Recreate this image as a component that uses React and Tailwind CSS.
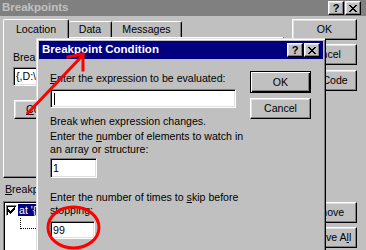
import React from "react";

function CloseGlyph() {
  return (
    <svg width="8" height="7" viewBox="0 0 8 7" shapeRendering="crispEdges">
      <rect x="0" y="0" width="2" height="1" fill="#000" />
      <rect x="6" y="0" width="2" height="1" fill="#000" />
      <rect x="1" y="1" width="2" height="1" fill="#000" />
      <rect x="5" y="1" width="2" height="1" fill="#000" />
      <rect x="2" y="2" width="4" height="1" fill="#000" />
      <rect x="3" y="3" width="2" height="1" fill="#000" />
      <rect x="2" y="4" width="4" height="1" fill="#000" />
      <rect x="1" y="5" width="2" height="1" fill="#000" />
      <rect x="5" y="5" width="2" height="1" fill="#000" />
      <rect x="0" y="6" width="2" height="1" fill="#000" />
      <rect x="6" y="6" width="2" height="1" fill="#000" />
    </svg>
  );
}

function CapButtons() {
  return (
    <div className="flex gap-[1px]">
      <div className="flex h-[14px] w-[16px] items-center justify-center border border-t-white border-l-white border-r-black border-b-black bg-[#c0c0c0] shadow-[inset_-1px_-1px_0_#808080,inset_1px_1px_0_#dfdfdf]">
        <span className="text-[11px] font-bold leading-none text-black">?</span>
      </div>
      <div className="flex h-[14px] w-[16px] items-center justify-center border border-t-white border-l-white border-r-black border-b-black bg-[#c0c0c0] shadow-[inset_-1px_-1px_0_#808080,inset_1px_1px_0_#dfdfdf]">
        <CloseGlyph />
      </div>
    </div>
  );
}

function Btn({ children, className = "" }) {
  return (
    <div
      className={
        "flex items-center justify-center border border-t-white border-l-white border-r-black border-b-black bg-[#c0c0c0] shadow-[inset_-1px_-1px_0_#808080,inset_1px_1px_0_#dfdfdf] whitespace-nowrap " +
        className
      }
    >
      {children}
    </div>
  );
}

function Field({ children, className = "" }) {
  return (
    <div
      className={
        "flex items-center border border-t-[#808080] border-l-[#808080] border-r-white border-b-white bg-white pl-[2px] shadow-[inset_1px_1px_0_#000,inset_-1px_-1px_0_#dfdfdf] whitespace-nowrap overflow-hidden " +
        className
      }
    >
      {children}
    </div>
  );
}

export default function App() {
  return (
    <div className="relative h-[250px] w-[366px] overflow-hidden bg-[#c0c0c0] font-['Liberation_Sans',Arial,sans-serif] text-[10.6px] leading-[13px] text-black">
      {/* Outer window title bar */}
      <div className="flex h-[16px] items-center bg-[#808080] pl-[2px] pr-[5px]">
        <span className="text-[11.5px] font-bold leading-none text-[#c0c0c0]">Breakpoints</span>
        <div className="ml-auto">
          <CapButtons />
        </div>
      </div>

      {/* Outer window body */}
      <div className="flex pl-[3px] pt-[3px]">
        {/* left column */}
        <div className="flex w-[281px] flex-col">
          <div className="relative z-10 flex h-[18px] items-end">
            <div className="mb-[-1px] flex h-[19px] w-[66px] justify-center rounded-t-[2px] border-t border-l border-r border-t-white border-l-white border-r-black bg-[#c0c0c0] pt-[3px] shadow-[inset_-1px_0_0_#808080]">
              Location
            </div>
            <div className="flex h-[16px] w-[43px] justify-center rounded-t-[2px] border-t border-r border-t-white border-r-black bg-[#c0c0c0] pt-[1px] shadow-[inset_-1px_0_0_#808080]">
              Data
            </div>
            <div className="flex h-[16px] w-[70px] justify-center rounded-t-[2px] border-t border-r border-t-white border-r-black bg-[#c0c0c0] pt-[1px] shadow-[inset_-1px_0_0_#808080]">
              Messages
            </div>
          </div>
          <div className="flex h-[141px] flex-col border border-t-white border-l-white border-r-black border-b-black pl-[9px] pt-[13px] shadow-[inset_-1px_-1px_0_#808080]">
            <div>Break at:</div>
            <Field className="mt-[3px] h-[19px] w-[240px] pl-[2px]">{"{,D:\\dev\\main.c,}.42"}</Field>
            <Btn className="ml-[1px] mt-[14px] h-[19px] w-[110px] !justify-start pl-[11px]">
              <span>
                <span className="underline">C</span>ondition...
              </span>
            </Btn>
          </div>
          <div className="ml-[2px] mt-[5px]">
            <span className="underline">B</span>reakpoints:
          </div>
          <div className="mt-[5px] h-[60px] border border-t-[#808080] border-l-[#808080] border-r-white border-b-white bg-white p-[1px] shadow-[inset_1px_1px_0_#000]">
            <div className="flex h-[13px] items-center pl-[1px] pt-[1px]">
              <div className="flex h-[11px] w-[11px] items-center justify-center border border-t-[#808080] border-l-[#808080] border-r-white border-b-white bg-white shadow-[inset_1px_1px_0_#000]">
                <svg width="7" height="7" viewBox="0 0 7 7" shapeRendering="crispEdges">
                  <path d="M6 0h1v3h-1v1h-1v1h-1v1h-1v1h-1v-1h-1v-1h-1v-3h1v1h1v1h1v-1h1v-1h1z" fill="#000" />
                </svg>
              </div>
              <div className="ml-[1px] h-[12px] flex-1 bg-[#000080] pl-[1px] leading-[12px] text-white whitespace-nowrap">
                at '{"{,D:\\dev\\main.c,}.42"}'
              </div>
            </div>
            <div className="ml-[15px] mt-[2px] h-[11px] w-[30px] border-l border-b border-dotted border-black" />
          </div>
        </div>

        {/* right column */}
        <div className="ml-[8px] flex w-[65px] flex-col">
          <Btn className="h-[21px]">OK</Btn>
          <Btn className="mt-[4px] h-[21px]">Cancel</Btn>
          <Btn className="mt-[5px] h-[21px]">Edit Code</Btn>
          <Btn className="mt-[111px] h-[21px]">Remove</Btn>
          <Btn className="mt-[4px] h-[21px]">
            <span>
              Remove A<span className="underline">l</span>l
            </span>
          </Btn>
        </div>
      </div>

      {/* Inner dialog: Breakpoint Condition */}
      <div className="absolute left-[36px] top-[38px] z-20 h-[230px] w-[290px] border border-t-[#dfdfdf] border-l-[#dfdfdf] border-r-black border-b-black bg-[#c0c0c0] p-[2px] shadow-[inset_1px_1px_0_#fff,inset_-1px_-1px_0_#808080]">
        <div className="flex h-[18px] items-center bg-[#000080] pl-[3px] pr-[3px]">
          <span className="text-[11.5px] font-bold leading-none text-white">Breakpoint Condition</span>
          <div className="ml-auto">
            <CapButtons />
          </div>
        </div>
        <div className="flex">
          <div className="flex flex-col pl-[11px] pt-[13px]">
            <div>
              <span className="underline">E</span>nter the expression to be evaluated:
            </div>
            <Field className="mt-[4px] h-[19px] w-[186px]">
              <div className="ml-[1px] h-[12px] w-[1px] bg-black" />
            </Field>
            <div className="mt-[7px]">Break when expression changes.</div>
            <div className="mt-[2px]">
              Enter the <span className="underline">n</span>umber of elements to watch in
            </div>
            <div>an array or structure:</div>
            <Field className="mt-[2px] h-[20px] w-[47px]">1</Field>
            <div className="mt-[13px]">
              Enter the number of times to <span className="underline">s</span>kip before
            </div>
            <div className="mt-[0px]">stopping:</div>
            <Field className="mt-[4px] h-[18px] w-[45px]">99</Field>
          </div>
          <div className="ml-auto flex flex-col pr-[12px] pt-[12px]">
            <div className="flex h-[22px] w-[61px] items-center justify-center border border-black bg-[#c0c0c0] shadow-[inset_1px_1px_0_#fff,inset_-1px_-1px_0_#000,inset_-2px_-2px_0_#808080]">
              OK
            </div>
            <Btn className="mt-[5px] h-[21px] w-[61px]">Cancel</Btn>
          </div>
        </div>
      </div>

      {/* Red annotations */}
      <svg className="pointer-events-none absolute left-0 top-0 z-30" width="366" height="250" viewBox="0 0 366 250">
        <g stroke="#ff0000" strokeWidth="3" fill="none" strokeLinecap="square">
          <line x1="28" y1="113" x2="82" y2="56" />
          <line x1="68" y1="57" x2="83" y2="54" />
          <line x1="83" y1="55" x2="83" y2="70" />
          <ellipse cx="73.5" cy="227.5" rx="25.5" ry="20.5" />
        </g>
      </svg>
    </div>
  );
}
